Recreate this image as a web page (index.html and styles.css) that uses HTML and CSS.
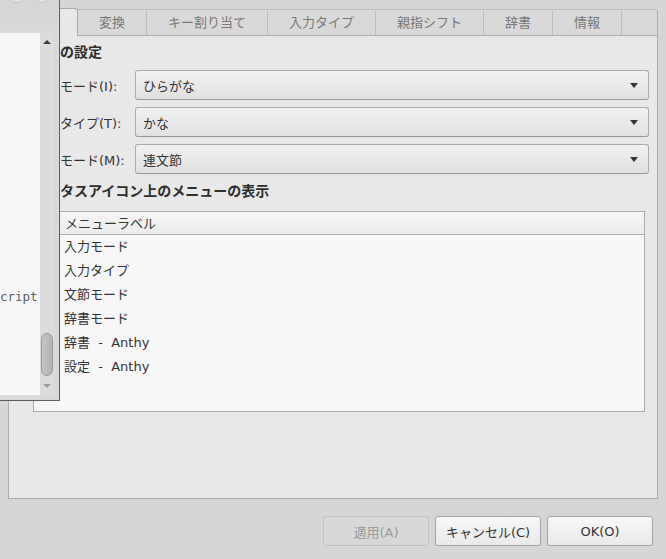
FILE: index.html
```html
<!DOCTYPE html>
<html lang="ja">
<head>
<meta charset="utf-8">
<title>Anthy 設定</title>
<link rel="stylesheet" href="styles.css">
</head>
<body>
<div class="dialog">
  <div class="notebook">
    <div class="tabs">
      <div class="tab active">一般</div>
      <div class="tab">変換</div>
      <div class="tab">キー割り当て</div>
      <div class="tab">入力タイプ</div>
      <div class="tab">親指シフト</div>
      <div class="tab">辞書</div>
      <div class="tab">情報</div>
      <div class="tab-fill"></div>
    </div>
    <div class="panel">
      <div class="section-title">既定値の設定</div>
      <div class="form">
        <div class="flabel">入力モード(I):</div>
        <div class="combo"><span class="combo-text">ひらがな</span><span class="arrow"></span></div>
        <div class="flabel">入力タイプ(T):</div>
        <div class="combo"><span class="combo-text">かな</span><span class="arrow"></span></div>
        <div class="flabel">文節モード(M):</div>
        <div class="combo"><span class="combo-text">連文節</span><span class="arrow"></span></div>
      </div>
      <div class="section-title second">ステータスアイコン上のメニューの表示</div>
      <div class="list">
        <div class="list-head">メニューラベル</div>
        <div class="list-body">
          <div class="row">入力モード</div>
          <div class="row">入力タイプ</div>
          <div class="row">文節モード</div>
          <div class="row">辞書モード</div>
          <div class="row">辞書  -  Anthy</div>
          <div class="row">設定  -  Anthy</div>
        </div>
      </div>
    </div>
  </div>
  <div class="buttons">
    <button class="btn disabled">適用(A)</button>
    <button class="btn">キャンセル(C)</button>
    <button class="btn">OK(O)</button>
  </div>
</div>

<div class="overlay">
  <div class="ov-head"><span class="ov-btn b1"></span><span class="ov-btn b2"></span></div>
  <div class="ov-body">
    <div class="ov-text"><div class="code-line">cript</div></div>
    <div class="ov-scroll">
      <div class="sbtn"><span class="sarrow up"></span></div>
      <div class="strack"><div class="thumb"></div></div>
      <div class="sbtn down-btn"><span class="sarrow down"></span></div>
    </div>
  </div>
</div>
</body>
</html>
```
FILE: styles.css
```css
* { box-sizing: border-box; }
html, body {
  margin: 0;
  padding: 0;
}
body {
  width: 666px;
  height: 559px;
  overflow: hidden;
  background: #d6d6d6;
  font-family: "DejaVu Sans", "Noto Sans CJK JP", sans-serif;
  font-size: 13px;
  color: #333;
  position: relative;
}
.dialog {
  padding: 8px 8px 0 8px;
}
.notebook {
  width: 650px;
}
.tabs {
  display: flex;
  height: 27px;
}
.tab {
  margin-top: 1px;
  height: 26px;
  padding: 0 21px;
  border-top: 1px solid #bdbdbd;
  border-right: 1px solid #bdbdbd;
  background: #d9d9d9;
  color: #777;
  line-height: 26px;
  white-space: nowrap;
}
.tab.active {
  margin-top: 0;
  height: 28px;
  margin-bottom: -1px;
  border: 1px solid #aaa;
  border-bottom: none;
  background: #e8e8e8;
  color: #333;
  position: relative;
  z-index: 1;
  border-radius: 3px 3px 0 0;
}
.tab-fill {
  flex: 1;
  margin-top: 1px;
  height: 26px;
  border-top: 1px solid #bdbdbd;
  border-right: 1px solid #b0b0b0;
  border-radius: 0 4px 0 0;
  background: #d9d9d9;
}
.panel {
  height: 464px;
  border: 1px solid #ababab;
  background: #e8e8e8;
  display: flex;
  flex-direction: column;
}
.section-title {
  margin: 7px 0 0 9px;
  height: 18px;
  line-height: 18px;
  font-size: 14px;
  font-weight: bold;
  color: #2e2e2e;
  white-space: nowrap;
}
.section-title.second {
  margin-top: 8px;
}
.form {
  margin: 9px 8px 0 25px;
  display: grid;
  grid-template-columns: 101px 1fr;
  row-gap: 7px;
  align-items: center;
}
.flabel {
  white-space: nowrap;
  color: #333;
}
.combo {
  height: 30px;
  border: 1px solid #a9a9a9;
  border-bottom-color: #989898;
  border-radius: 3px;
  background: linear-gradient(#f0f0f0, #e1e1e1);
  display: flex;
  align-items: center;
  padding: 0 10px 0 7px;
}
.combo-text {
  flex: 1;
  color: #333;
}
.arrow {
  width: 0;
  height: 0;
  border-left: 4px solid transparent;
  border-right: 4px solid transparent;
  border-top: 5px solid #333;
}
.list {
  margin: 11px 12px 0 24px;
  height: 201px;
  border: 1px solid #ababab;
  background: #f7f7f7;
}
.list-head {
  height: 23px;
  line-height: 23px;
  padding-left: 31px;
  background: linear-gradient(#f6f6f6, #ececec);
  border-bottom: 1px solid #ababab;
  color: #333;
}
.list-body {
  padding-top: 2px;
}
.row {
  height: 24px;
  line-height: 20px;
  padding-left: 30px;
  white-space: pre;
  color: #333;
}
.buttons {
  display: flex;
  justify-content: flex-end;
  gap: 6px;
  margin-top: 17px;
  padding-right: 5px;
}
.btn {
  width: 106px;
  height: 30px;
  font: inherit;
  color: #333;
  border: 1px solid #a3a3a3;
  border-radius: 3px;
  background: linear-gradient(#f8f8f8, #e9e9e9);
  padding: 0;
}
.btn.disabled {
  color: #9a9a9a;
  background: #d8d8d8;
  border-color: #c2c2c2;
}

/* overlapping window on the left */
.overlay {
  position: absolute;
  left: 0;
  top: 0;
  width: 60px;
  height: 401px;
  border-right: 1px solid #5e5e5e;
  border-bottom: 1px solid #5e5e5e;
  background: #d9d9d9;
  z-index: 5;
  overflow: hidden;
}
.ov-head {
  height: 33px;
  position: relative;
  background: linear-gradient(#d6d6d6, #dadada);
}
.ov-btn {
  position: absolute;
  top: -12px;
  width: 15px;
  height: 15px;
  border-radius: 50%;
  background: #e4e4e4;
  border: 1px solid #c4c4c4;
}
.ov-btn.b1 { left: 9px; }
.ov-btn.b2 { left: 34px; }
.ov-body {
  display: flex;
  height: 362px;
}
.ov-text {
  width: 40px;
  background: #f7f7f7;
  overflow: hidden;
}
.code-line {
  padding-top: 255px;
  line-height: 18px;
  font-family: "DejaVu Sans Mono", monospace;
  font-size: 12.5px;
  color: #5a5e66;
  white-space: nowrap;
}
.ov-scroll {
  width: 14px;
  background: #dcdcdc;
  display: flex;
  flex-direction: column;
}
.sbtn {
  height: 17px;
  display: flex;
  align-items: center;
  justify-content: center;
}
.sbtn.down-btn {
  height: 18px;
}
.sarrow {
  width: 0;
  height: 0;
  border-left: 4px solid transparent;
  border-right: 4px solid transparent;
}
.sarrow.up { border-bottom: 4px solid #3a3a3a; }
.sarrow.down { border-top: 4px solid #9c9c9c; }
.strack {
  flex: 1;
  padding: 0 1px;
}
.thumb {
  margin-top: 283px;
  height: 43px;
  border: 1px solid #9a9a9a;
  border-radius: 6px;
  background: linear-gradient(90deg, #c4c4c4, #b2b2b2);
}
```
